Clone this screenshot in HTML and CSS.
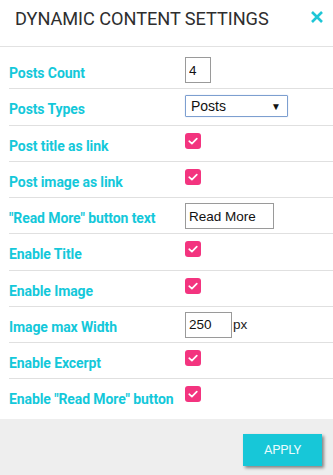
FILE: index.html
```html
<!DOCTYPE html>
<html>
<head>
<meta charset="utf-8">
<link rel="stylesheet" href="styles.css">
</head>
<body>
<div class="dialog">
  <header class="head">
    <h1 class="title">DYNAMIC CONTENT SETTINGS</h1>
    <svg class="close" width="14" height="14" viewBox="0 0 14 14"><path d="M2 2 L12 12 M12 2 L2 12" stroke="#1fc6d6" stroke-width="2.6" stroke-linecap="butt"/></svg>
  </header>
  <div class="body">
    <div class="row">
      <div class="label">Posts Count</div>
      <div class="ctrl"><input class="field w25" value="4"></div>
    </div>
    <div class="row">
      <div class="label">Posts Types</div>
      <div class="ctrl"><div class="select"><span>Posts</span><span class="arrow">▼</span></div></div>
    </div>
    <div class="row">
      <div class="label">Post title as link</div>
      <div class="ctrl"><span class="check"><svg width="16" height="16" viewBox="0 0 16 16"><path d="M4.2 8.2 L6.9 10.6 L11.8 5.6" fill="none" stroke="#fff" stroke-width="1.7" stroke-linecap="round" stroke-linejoin="round"/></svg></span></div>
    </div>
    <div class="row">
      <div class="label">Post image as link</div>
      <div class="ctrl"><span class="check"><svg width="16" height="16" viewBox="0 0 16 16"><path d="M4.2 8.2 L6.9 10.6 L11.8 5.6" fill="none" stroke="#fff" stroke-width="1.7" stroke-linecap="round" stroke-linejoin="round"/></svg></span></div>
    </div>
    <div class="row">
      <div class="label">"Read More" button text</div>
      <div class="ctrl"><input class="field w88" value="Read More"></div>
    </div>
    <div class="row">
      <div class="label">Enable Title</div>
      <div class="ctrl"><span class="check"><svg width="16" height="16" viewBox="0 0 16 16"><path d="M4.2 8.2 L6.9 10.6 L11.8 5.6" fill="none" stroke="#fff" stroke-width="1.7" stroke-linecap="round" stroke-linejoin="round"/></svg></span></div>
    </div>
    <div class="row">
      <div class="label">Enable Image</div>
      <div class="ctrl"><span class="check"><svg width="16" height="16" viewBox="0 0 16 16"><path d="M4.2 8.2 L6.9 10.6 L11.8 5.6" fill="none" stroke="#fff" stroke-width="1.7" stroke-linecap="round" stroke-linejoin="round"/></svg></span></div>
    </div>
    <div class="row">
      <div class="label">Image max Width</div>
      <div class="ctrl"><input class="field w46" value="250"><span class="unit">px</span></div>
    </div>
    <div class="row">
      <div class="label">Enable Excerpt</div>
      <div class="ctrl"><span class="check"><svg width="16" height="16" viewBox="0 0 16 16"><path d="M4.2 8.2 L6.9 10.6 L11.8 5.6" fill="none" stroke="#fff" stroke-width="1.7" stroke-linecap="round" stroke-linejoin="round"/></svg></span></div>
    </div>
    <div class="row">
      <div class="label">Enable "Read More" button</div>
      <div class="ctrl"><span class="check"><svg width="16" height="16" viewBox="0 0 16 16"><path d="M4.2 8.2 L6.9 10.6 L11.8 5.6" fill="none" stroke="#fff" stroke-width="1.7" stroke-linecap="round" stroke-linejoin="round"/></svg></span></div>
    </div>
  </div>
  <footer class="foot">
    <button class="apply">APPLY</button>
  </footer>
</div>
</body>
</html>
```
FILE: styles.css
```css
html, body {
  margin: 0;
  padding: 0;
  background: #ffffff;
}
.dialog {
  width: 333px;
  height: 475px;
  display: flex;
  flex-direction: column;
  font-family: Roboto, "Liberation Sans", sans-serif;
}
.head {
  height: 47px;
  box-sizing: border-box;
  border-bottom: 1px solid #e2e2e2;
  display: flex;
  align-items: flex-start;
  justify-content: space-between;
  padding: 0 9px 0 15px;
}
.title {
  margin: 0;
  padding-top: 8px;
  font-size: 18.2px;
  font-weight: 400;
  line-height: 22px;
  color: #2e2e2e;
  letter-spacing: -0.05px;
}
.close {
  margin-top: 10px;
}
.body {
  padding: 5px 0 4px 9px;
  display: flex;
  flex-direction: column;
}
.row {
  height: 36.25px;
  box-sizing: border-box;
  display: grid;
  grid-template-columns: 176px 1fr;
  align-items: start;
  border-top: 1px solid #e0e0e0;
}
.row:first-child {
  border-top: none;
}
.label {
  padding-top: 12px;
  font-size: 14px;
  font-weight: 700;
  line-height: 16px;
  color: #14c8da;
  letter-spacing: -0.1px;
  white-space: nowrap;
}
.row:first-child .label {
  padding-top: 13px;
}
.ctrl {
  display: flex;
  align-items: center;
  padding-top: 5px;
}
.field {
  box-sizing: border-box;
  height: 26px;
  margin: 0;
  border: 1px solid #9a9a9a;
  padding: 0 3px;
  font-family: "Liberation Sans", Arial, sans-serif;
  font-size: 13.5px;
  color: #111;
  background: #fff;
  outline: none;
}
.w25 { width: 26px; }
.w88 { width: 89px; }
.w46 { width: 47px; }
.unit {
  margin-left: 1px;
  font-family: "Liberation Sans", Arial, sans-serif;
  font-size: 13.5px;
  color: #222;
}
.select {
  box-sizing: border-box;
  width: 103px;
  height: 22px;
  margin-top: 1px;
  border: 1px solid #7d9fd0;
  border-radius: 1px;
  display: flex;
  align-items: center;
  justify-content: space-between;
  padding: 0 6px 0 5px;
  font-family: "Liberation Sans", Arial, sans-serif;
  font-size: 14px;
  color: #111;
  box-shadow: 0 0 1px rgba(80, 130, 210, 0.5);
}
.arrow {
  font-size: 10px;
  color: #111;
}
.check {
  display: block;
  width: 16px;
  height: 16px;
  margin-top: 2px;
  border-radius: 3px;
  background: #f3347f;
}
.check svg {
  display: block;
}
.foot {
  flex: 1;
  background: #eeeeee;
  display: flex;
  justify-content: flex-end;
  align-items: flex-start;
  padding: 15px 11px 0 0;
}
.apply {
  width: 79px;
  height: 32px;
  border: none;
  background: #17c7d8;
  color: #e8fbfd;
  font-family: Roboto, "Liberation Sans", sans-serif;
  font-size: 13px;
  letter-spacing: -0.2px;
  box-shadow: 2px 2px 3px rgba(0, 0, 0, 0.45);
  padding: 0;
}
```
